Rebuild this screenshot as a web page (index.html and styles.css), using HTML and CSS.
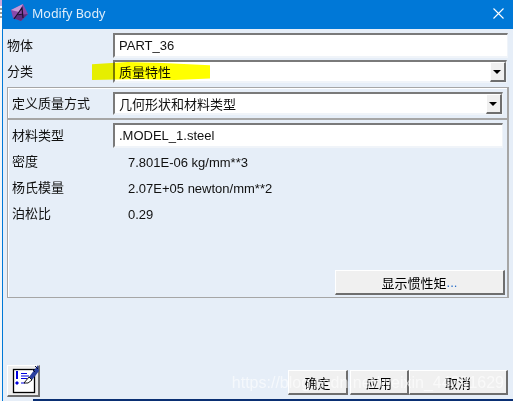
FILE: index.html
```html
<!DOCTYPE html>
<html lang="zh">
<head>
<meta charset="utf-8">
<title>Modify Body</title>
<link rel="stylesheet" href="styles.css">
</head>
<body>
<div class="window">
  <header class="titlebar">
    <svg class="app-icon" width="18" height="18" viewBox="0 0 18 18">
      <path d="M0 6 L12 0 L17 10 L10 17 L2 14 Z" fill="#8a4aa8"/>
      <path d="M0 6 L12 0 L8 8 Z" fill="#c79ad8"/>
      <path d="M2 14 L10 17 L17 10 L8 11 Z" fill="#5c2d80"/>
      <path d="M3 15 L11 4 L12 14 M6 11 L12 10" fill="none" stroke="#1c1030" stroke-width="1.2"/>
    </svg>
    <span class="title">Modify Body</span>
    <svg class="close" width="11" height="11" viewBox="0 0 11 11">
      <path d="M0.5 0.5 L10.5 10.5 M10.5 0.5 L0.5 10.5" stroke="#fff" stroke-width="1.1"/>
    </svg>
  </header>
  <main class="content">
    <div class="row row-name">
      <label class="label">物体</label>
      <div class="field">PART_36</div>
    </div>
    <div class="row row-cat">
      <span class="highlight"></span>
      <label class="label">分类</label>
      <div class="field select">
        <span class="select-text">质量特性</span>
        <span class="arrow"></span>
      </div>
    </div>
    <section class="group">
      <div class="row row-method">
        <label class="label">定义质量方式</label>
        <div class="field select">
          <span>几何形状和材料类型</span>
          <span class="arrow"></span>
        </div>
      </div>
      <div class="inner">
        <div class="row row-mat">
          <label class="label">材料类型</label>
          <div class="field">.MODEL_1.steel</div>
        </div>
        <div class="prop"><span class="label">密度</span><span class="value">7.801E-06 kg/mm**3</span></div>
        <div class="prop"><span class="label">杨氏模量</span><span class="value">2.07E+05 newton/mm**2</span></div>
        <div class="prop"><span class="label">泊松比</span><span class="value">0.29</span></div>
        <div class="inertia-row"><button class="btn inertia">显示惯性矩<span class="dots">...</span></button></div>
      </div>
    </section>
    <footer class="footer">
      <button class="btn note" aria-label="note">
        <svg class="note-icon" width="32" height="30" viewBox="0 0 32 30">
          <rect x="5.5" y="3.5" width="21" height="23" fill="#fff" stroke="#000" stroke-width="1.3"/>
          <path d="M9 5v8M7.5 17h3M9 15.5v3" stroke="#0000e0" stroke-width="2"/>
          <path d="M13 7.5h6M13 10h8M13 12.5h6M13 17h4" stroke="#0000e0" stroke-width="1.1"/>
          <path d="M21 11 L30 -1 L31 5 L24 14 Z" fill="#2a3f9e"/>
          <path d="M24 3l3 3M27 0l3 3" stroke="#0a1030" stroke-width="1"/>
          <path d="M16 17 L21 11 L24 14 L20 17 Z" fill="#fff" stroke="#000" stroke-width=".9"/>
        </svg>
      </button>
      <div class="actions">
        <button class="btn ok">确定</button>
        <button class="btn apply">应用</button>
        <button class="btn cancel">取消</button>
      </div>
    </footer>
    <span class="watermark">https://blog.csdn.net/weixin_44291629</span>
  </main>
</div>
</body>
</html>
```
FILE: styles.css
```css
* { box-sizing: border-box; }
html, body { margin: 0; padding: 0; }
body {
  width: 513px; height: 401px; overflow: hidden;
  background-color: #f4f6f8;
  background-image: linear-gradient(#c9a8dc 0 6px, #fff 6px 8px, #9a9a9a 8px 10px, #fff 10px 12px, #9a9a9a 12px 14px, #fff 14px 16px, #9a9a9a 16px 18px, #fff 18px);
  background-size: 2px 30px;
  background-repeat: no-repeat;
}
.window {
  position: relative;
  width: 511px; height: 401px;
  margin-left: 2px;
  display: flex; flex-direction: column;
  border-left: 1px solid #0078d7;
  font-family: "Liberation Sans", "Noto Sans CJK SC", sans-serif;
  font-size: 13px;
  color: #111;
  background: #e6eef8;
}
.window::after {
  content: ""; position: absolute; left: 30px; right: 0; bottom: 0; height: 2px;
  background: #0a2f73;
}
.titlebar {
  height: 29px; flex: none;
  display: flex; align-items: center;
  background: #0078d7; color: #fff;
  padding: 0 9px 0 8px;
}
.app-icon { margin-top: -3px; }
.title { margin-left: 3px; margin-top: -2px; font-family: "Noto Sans", "Liberation Sans", sans-serif; font-size: 12.5px; color: #dfeefb; }
.close { margin-left: auto; margin-top: -3px; }
.content { position: relative; flex: 1; padding: 4px 0 0 4px; display: flex; flex-direction: column; }
.row { display: flex; align-items: center; position: relative; }
.label { font-size: 13px; line-height: 16px; }
.field {
  background: #fff; flex: none;
  border-top: 2px solid #7a7a7a; border-left: 2px solid #7a7a7a;
  border-right: 1px solid #f0f4f9; border-bottom: 2px solid #f0f4f9;
  font-size: 13px; padding-left: 4px;
  display: flex; align-items: center; justify-content: space-between;
}
.row-name .label, .row-cat .label { width: 106px; }
.row-name { height: 25px; }
.row-name .field { width: 395px; height: 25px; }
.row-cat { height: 23px; margin-top: 2px; }
.row-cat .field { width: 394px; height: 23px; }
.highlight {
  position: absolute; left: 85px; top: 2px; width: 118px; height: 18px;
  background: #ffff00; mix-blend-mode: multiply; z-index: 1;
  clip-path: polygon(0 12%, 30% 0, 60% 6%, 100% 18%, 100% 92%, 70% 100%, 40% 94%, 0 100%);
}
.arrow {
  width: 16px; height: 20px; flex: none; align-self: flex-end; margin-bottom: -1px;
  background: #f0f0f0;
  border-top: 1px solid #fff; border-left: 1px solid #fff;
  border-right: 2px solid #6e6e6e; border-bottom: 2px solid #6e6e6e;
  position: relative;
}
.arrow::after {
  content: ""; position: absolute; left: 2px; top: 7px;
  border-left: 4px solid transparent; border-right: 4px solid transparent; border-top: 4px solid #000;
}
.group {
  margin: 4px 0 0 0; width: 502px; height: 211px; flex: none;
  border: 1px solid #a6a6a6; border-right-width: 2px;
  box-shadow: inset 1px 1px 0 #fff;
  display: flex; flex-direction: column;
}
.row-method { height: 30px; padding: 4px 0 3px 4px; flex: none; }
.row-method .label { width: 101px; }
.row-method .field { width: 390px; height: 23px; }
.inner { flex: 1; border-top: 2px solid #a6a6a6; padding: 3px 0 0 4px; display: flex; flex-direction: column; }
.row-mat { height: 25px; flex: none; }
.row-mat .label { width: 101px; }
.row-mat .field { width: 390px; height: 25px; }
.prop { display: flex; align-items: center; height: 26px; flex: none; }
.row-mat + .prop { margin-top: 1px; }
.prop .label { width: 116px; }
.value { font-size: 13px; }
.inertia-row { margin-top: auto; padding: 0 2px 2px 0; display: flex; justify-content: flex-end; }
.btn {
  font-family: "Liberation Sans", "Noto Sans CJK SC", sans-serif;
  font-size: 13px; color: #000;
  background: #f0f0f0; padding: 0;
  border-top: 1px solid #fff; border-left: 1px solid #fff;
  border-right: 2px solid #6e6e6e; border-bottom: 2px solid #6e6e6e;
  display: flex; align-items: center; justify-content: center;
}
.dots { color: #2a6fc9; }
.inertia { width: 170px; height: 25px; }
.footer { margin-top: auto; height: 36px; padding: 0 5px 4px 0; display: flex; justify-content: space-between; align-items: flex-end; flex: none; }
.note { width: 33px; height: 32px; margin-left: 0; background: #eeeeee; display: block; }
.note-icon { display: block; overflow: visible; }
.actions { display: flex; height: 25px; margin-bottom: 2px; }
.ok { width: 60px; }
.apply { width: 59px; margin-left: 2px; }
.cancel { width: 99px; }
.watermark {
  position: absolute; right: 9px; bottom: 9px;
  font-size: 16px; color: rgba(255,255,255,.6); white-space: nowrap; pointer-events: none;
}
```
